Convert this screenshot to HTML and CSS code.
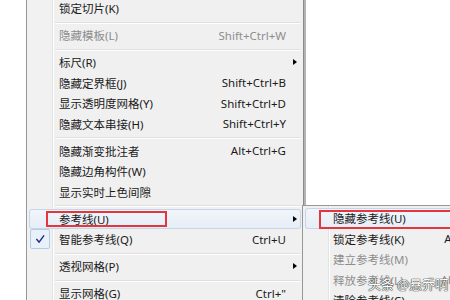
FILE: index.html
```html
<!DOCTYPE html>
<html lang="zh-CN">
<head>
	<meta charset="UTF-8">
	<title>视图菜单</title>
	<link rel="stylesheet" href="styles.css">
</head>
<body>

<div class="screen">
	<div class="menu main">
		<div class="item"><span class="ico"></span><span class="label">锁定切片(K)</span><span class="key"></span><span class="sub"></span></div>
		<div class="sep"></div>
		<div class="item off"><span class="ico"></span><span class="label">隐藏模板(L)</span><span class="key">Shift+Ctrl+W</span><span class="sub"></span></div>
		<div class="sep"></div>
		<div class="item"><span class="ico"></span><span class="label">标尺(R)</span><span class="key"></span><span class="sub"><i class="arrow"></i></span></div>
		<div class="item"><span class="ico"></span><span class="label">隐藏定界框(J)</span><span class="key">Shift+Ctrl+B</span><span class="sub"></span></div>
		<div class="item"><span class="ico"></span><span class="label">显示透明度网格(Y)</span><span class="key">Shift+Ctrl+D</span><span class="sub"></span></div>
		<div class="item"><span class="ico"></span><span class="label">隐藏文本串接(H)</span><span class="key">Shift+Ctrl+Y</span><span class="sub"></span></div>
		<div class="sep"></div>
		<div class="item"><span class="ico"></span><span class="label">隐藏渐变批注者</span><span class="key">Alt+Ctrl+G</span><span class="sub"></span></div>
		<div class="item"><span class="ico"></span><span class="label">隐藏边角构件(W)</span><span class="key"></span><span class="sub"></span></div>
		<div class="item"><span class="ico"></span><span class="label">显示实时上色间隙</span><span class="key"></span><span class="sub"></span></div>
		<div class="sep"></div>
		<div class="item hot"><span class="ico"></span><span class="label">参考线(U)</span><span class="key"></span><span class="sub"><i class="arrow"></i></span></div>
		<div class="item"><span class="ico checked">
			<svg width="20" height="20" viewBox="0 0 20 20"><path d="M6 10 L9 13.5 L14.5 6" fill="none" stroke="#1c2a8c" stroke-width="1.6"/></svg>
		</span><span class="label">智能参考线(Q)</span><span class="key">Ctrl+U</span><span class="sub"></span></div>
		<div class="sep"></div>
		<div class="item"><span class="ico"></span><span class="label">透视网格(P)</span><span class="key"></span><span class="sub"><i class="arrow"></i></span></div>
		<div class="sep"></div>
		<div class="item"><span class="ico"></span><span class="label">显示网格(G)</span><span class="key">Ctrl+"</span><span class="sub"></span></div>
	</div>

	<div class="menu submenu">
		<div class="item hot"><span class="ico"></span><span class="label">隐藏参考线(U)</span><span class="key">Ctrl+;</span><span class="sub"></span></div>
		<div class="item"><span class="ico"></span><span class="label">锁定参考线(K)</span><span class="key">Alt+Ctrl+;</span><span class="sub"></span></div>
		<div class="item off"><span class="ico"></span><span class="label">建立参考线(M)</span><span class="key">Ctrl+5</span><span class="sub"></span></div>
		<div class="item off"><span class="ico"></span><span class="label">释放参考线(L)</span><span class="key">Alt+Ctrl+5</span><span class="sub"></span></div>
		<div class="item"><span class="ico"></span><span class="label">清除参考线(C)</span><span class="key"></span><span class="sub"></span></div>
	</div>

	<div class="mark mark-main"></div>
	<div class="mark mark-sub"></div>

	<div class="watermark">头条 @悬乔啊</div>
</div>

</body>
</html>
```

FILE: styles.css
```css
body {
	margin: 0;
	background: #fff;
	font-family: "Noto Sans", "Noto Sans CJK SC", sans-serif;
	font-size: 11.5px;
	color: #1a1a1a;
	overflow: hidden;
}

.screen {
	position: relative;
	width: 450px;
	height: 300px;
	overflow: hidden;
}

/* popup menus, win7 look */
.menu {
	box-sizing: border-box;
	padding: 2px;
	border: 1px solid #979797;
	background: linear-gradient(to right, #f1f1f1 0 25px, #e2e3e3 25px 26px, #fff 26px 27px, #f0f0f0 27px);
}

.main {
	width: 278px;
	margin: -5px 0 0 26px;
	border-right-color: #8a8a8a;
	box-shadow: 2px 0 0 #b3b3b3;
}

.submenu {
	position: absolute;
	left: 302px;
	top: 205px;
	width: 210px;
	box-shadow: 2px 2px 2px rgba(0, 0, 0, .25);
}

.item {
	display: grid;
	grid-template-columns: 24px 1fr auto 15px;
	align-items: center;
	height: 20.5px;
	white-space: nowrap;
}

.item .label {
	padding-left: 6px;
}

.submenu .item .label {
	padding-left: 4px;
}

.item.off {
	color: #8d8d8d;
}

.item.hot {
	border-radius: 3px;
	background: linear-gradient(#f2f6fb, #e6edf6);
	box-shadow: inset 0 0 0 1px #c6d6ea;
}

.ico {
	display: flex;
	align-items: center;
	height: 100%;
}

.ico.checked svg {
	box-sizing: border-box;
	margin-left: 1px;
	border: 1px solid #b6cbe4;
	border-radius: 2px;
	background: #e8f0f9;
}

.sub {
	display: flex;
	justify-content: center;
}

.arrow {
	width: 0;
	height: 0;
	margin-left: 2px;
	border-left: 4px solid #000;
	border-top: 3.5px solid transparent;
	border-bottom: 3.5px solid transparent;
}

.sep {
	height: 6.5px;
	margin-left: 26px;
	background: linear-gradient(#f0f0f0 0 3px, #e0e0e0 3px 4px, #fff 4px 5px, #f0f0f0 5px);
}

/* red annotation boxes */
.mark {
	position: absolute;
	box-sizing: border-box;
	border: 2px solid #e5363d;
}

.mark-main {
	left: 46px;
	top: 211px;
	width: 121px;
	height: 16px;
}

.mark-sub {
	left: 319px;
	top: 210px;
	width: 140px;
	height: 19px;
}

.watermark {
	position: absolute;
	left: 368px;
	top: 274px;
	font-family: "Noto Sans CJK SC", sans-serif;
	font-size: 13px;
	color: #fff;
	text-shadow: 0 0 1px #333, 0 0 1px #333, 0 0 1px #333;
}
```
